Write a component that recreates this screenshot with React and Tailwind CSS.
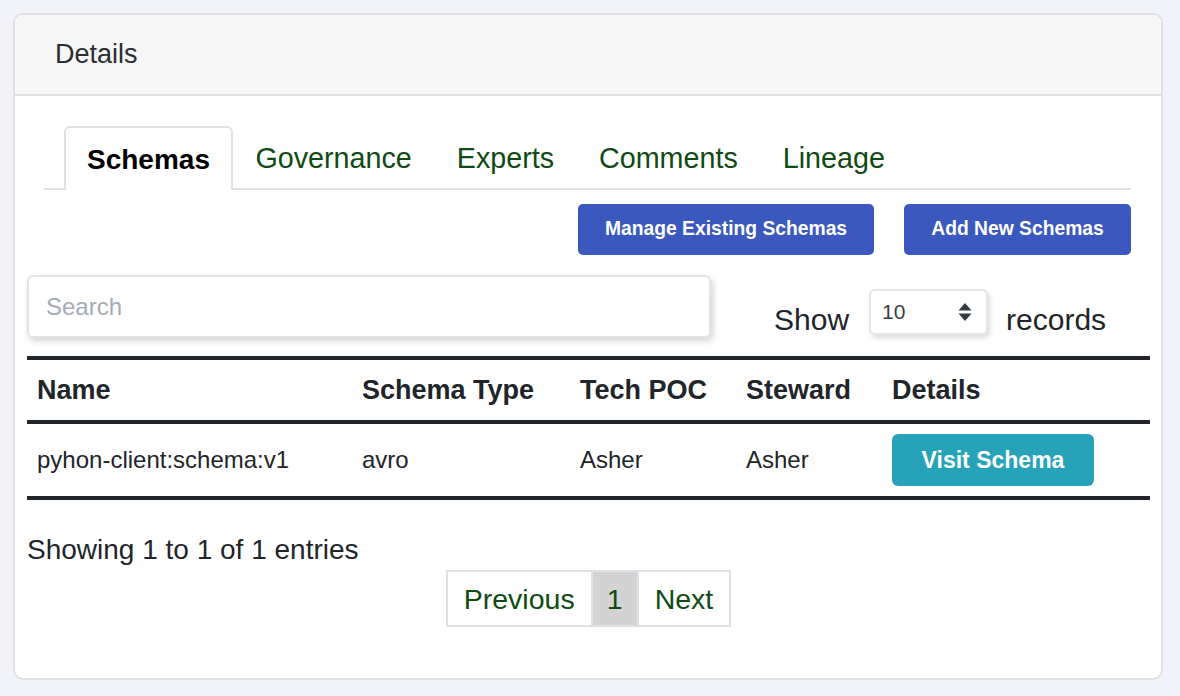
export default function App() {
    const tabs = ['Schemas', 'Governance', 'Experts', 'Comments', 'Lineage'];

    return (
        <div className="min-h-screen bg-[#f2f3f8] p-[13px] font-['Liberation_Sans',Arial,sans-serif] text-[#212529]">
            <div className="w-[1150px] h-[667px] rounded-[10px] border-2 border-[#dfe0e4] bg-white overflow-hidden">
                {/* Card header */}
                <div className="h-[81px] bg-[#f7f7f7] border-b-2 border-[#dfe0e4] pl-[40px] flex items-center">
                    <span className="text-[27px] text-[#2b2f33]">Details</span>
                </div>

                {/* Tabs */}
                <div className="pl-[29px] pr-[30px] pt-[30px]">
                    <div className="flex border-b-2 border-[#dee2e6]">
                        {tabs.map((t, i) => (
                            i === 0 ? (
                                <div key={t} className="ml-[20px] -mb-[2px] h-[64px] px-[21px] border-2 border-b-0 border-[#dee2e6] rounded-t-[6px] bg-white flex items-center pt-[1px] text-[28px] font-bold text-black">
                                    {t}
                                </div>
                            ) : (
                                <div key={t} className="h-[62px] px-[22.5px] flex items-center pt-[3px] text-[28.7px] text-[#0f4a14]">
                                    {t}
                                </div>
                            )
                        ))}
                    </div>
                    <div className="flex justify-end gap-[30px] mt-[14px]">
                        <button className="w-[296px] h-[51px] rounded-[5px] bg-[#3a58bd] text-white text-[19.3px] font-bold">Manage Existing Schemas</button>
                        <button className="w-[227px] h-[51px] rounded-[5px] bg-[#3a58bd] text-white text-[19.3px] font-bold">Add New Schemas</button>
                    </div>
                </div>

                {/* Table area */}
                <div className="pl-[12px] pr-[11px]">
                    <div className="flex items-start h-[63px] mt-[20px]">
                        <div className="w-[684px] h-[63px] rounded-[6px] border-2 border-[#e1e4e8] shadow-[2px_3px_6px_rgba(0,0,0,0.18)] flex items-center pl-[17px] text-[24px] text-[#a3acb5]">
                            Search
                        </div>
                        <div className="flex items-start mt-[14px] ml-[63px]">
                            <span className="mt-[13px] leading-[36px] text-[30px] text-[#212529]">Show</span>
                            <div className="ml-[20px] w-[119px] h-[46px] rounded-[6px] border-2 border-[#e1e4e8] shadow-[2px_3px_5px_rgba(0,0,0,0.15)] flex items-center justify-between pl-[11px] pr-[14px]">
                                <span className="text-[21px] text-[#3a3f44]">10</span>
                                <svg width="14" height="20" viewBox="0 0 14 20">
                                    <path d="M7 1 L13.5 8.5 H0.5 Z" fill="#343a40" />
                                    <path d="M7 19 L13.5 11.5 H0.5 Z" fill="#343a40" />
                                </svg>
                            </div>
                            <span className="ml-[18px] mt-[13px] leading-[36px] text-[30px] text-[#212529]">records</span>
                        </div>
                    </div>

                    <table className="w-full mt-[18px] border-collapse">
                        <thead>
                            <tr className="border-t-4 border-b-4 border-[#212529] h-[64px] text-left">
                                <th className="w-[325px] pl-[10px] text-[27px] font-bold">Name</th>
                                <th className="w-[218px] pl-[10px] text-[27px] font-bold">Schema Type</th>
                                <th className="w-[166px] pl-[10px] text-[27px] font-bold">Tech POC</th>
                                <th className="w-[146px] pl-[10px] text-[27px] font-bold">Steward</th>
                                <th className="pl-[10px] text-[27px] font-bold">Details</th>
                            </tr>
                        </thead>
                        <tbody>
                            <tr className="border-b-4 border-[#212529] h-[76px] text-[24px]">
                                <td className="pl-[10px]">pyhon-client:schema:v1</td>
                                <td className="pl-[10px]">avro</td>
                                <td className="pl-[10px]">Asher</td>
                                <td className="pl-[10px]">Asher</td>
                                <td className="pl-[10px]">
                                    <button className="w-[202px] h-[52px] rounded-[6px] bg-[#27a3b9] text-white text-[23px] font-bold">Visit Schema</button>
                                </td>
                            </tr>
                        </tbody>
                    </table>

                    <div className="mt-[32px] leading-[36px] text-[28px] text-[#212529]">Showing 1 to 1 of 1 entries</div>

                    <div className="flex justify-center mt-[2px]">
                        <div className="flex h-[57px] border-2 border-[#dee2e6] text-[28.5px] text-[#0f4a14]">
                            <div className="px-[16px] flex items-center pt-[2px]">Previous</div>
                            <div className="w-[48px] border-x-2 border-[#dee2e6] bg-[#d3d3d3] flex items-center justify-center pt-[2px]">1</div>
                            <div className="px-[16px] flex items-center pt-[2px]">Next</div>
                        </div>
                    </div>
                </div>
            </div>
        </div>
    );
}
